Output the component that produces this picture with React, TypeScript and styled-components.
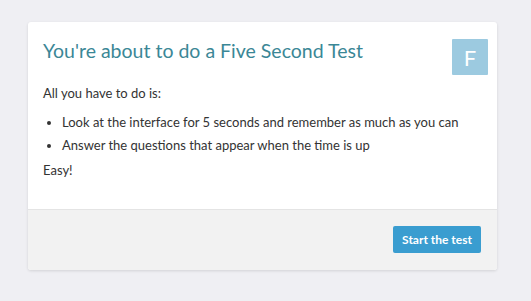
import React from "react";
import styled, { createGlobalStyle } from "styled-components";

const Global = createGlobalStyle`
  html, body { margin: 0; padding: 0; background: #efeff3; }
  body { font-family: Lato, "Open Sans", sans-serif; }
`;

const Page = styled.div`
  padding: 22px 34px 30px 28px;
`;

const Card = styled.div`
  background: #ffffff;
  border-radius: 3px;
  box-shadow: 0 1px 3px rgba(0, 0, 0, 0.12);
  overflow: hidden;
`;

const Body = styled.div`
  padding: 17px 9px 30px 15px;
`;

const Header = styled.div`
  display: flex;
  justify-content: space-between;
  align-items: flex-start;
`;

const Title = styled.h1`
  margin: 0;
  font-size: 19.5px;
  font-weight: 400;
  color: #3b8796;
  line-height: 24px;
`;

const Avatar = styled.div`
  width: 36px;
  height: 36px;
  background: #9ccae0;
  color: #ffffff;
  display: flex;
  align-items: center;
  justify-content: center;
  font-size: 22px;
  border-radius: 1px;
`;

const Text = styled.p<{ $top?: number }>`
  margin: ${(p) => (p.$top ?? 9)}px 0 0;
  font-size: 13px;
  line-height: 18px;
  color: #333333;
`;

const List = styled.ul`
  margin: 11px 0 0;
  padding-left: 19px;
  font-size: 13px;
  line-height: 19px;
  color: #333333;
`;

const Item = styled.li`
  margin-bottom: 4px;
`;

const Footer = styled.div`
  background: #f2f2f2;
  border-top: 1px solid #e4e4e4;
  padding: 16px 16px 17px;
  display: flex;
  justify-content: flex-end;
`;

const Button = styled.button`
  width: 88px;
  height: 27px;
  background: #3a9dd0;
  border: none;
  border-radius: 2px;
  color: #ffffff;
  font-family: Lato, sans-serif;
  font-size: 12px;
  font-weight: 700;
  padding: 0;
`;

export default function App() {
  return (
    <>
      <Global />
      <Page>
        <Card>
          <Body>
            <Header>
              <Title>You're about to do a Five Second Test</Title>
              <Avatar>F</Avatar>
            </Header>
            <Text>All you have to do is:</Text>
            <List>
              <Item>Look at the interface for 5 seconds and remember as much as you can</Item>
              <Item>Answer the questions that appear when the time is up</Item>
            </List>
            <Text $top={6}>Easy!</Text>
          </Body>
          <Footer>
            <Button>Start the test</Button>
          </Footer>
        </Card>
      </Page>
    </>
  );
}
